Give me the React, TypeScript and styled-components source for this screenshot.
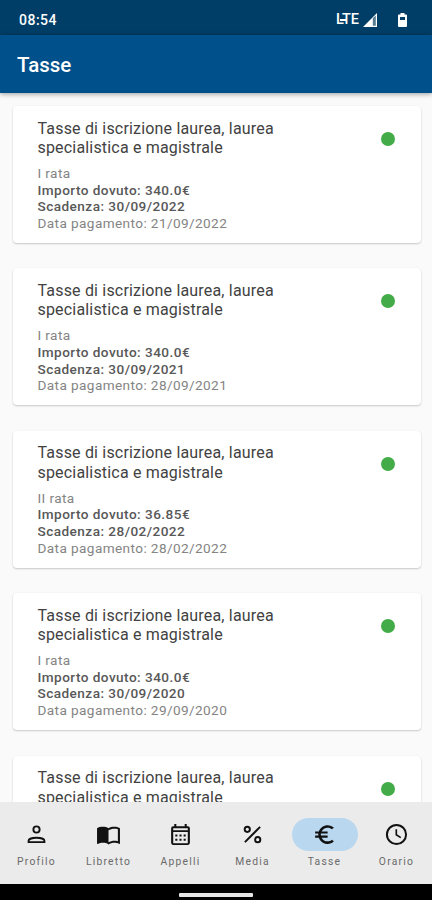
import React from "react";
import styled, { createGlobalStyle } from "styled-components";

const GlobalStyle = createGlobalStyle`
  * { box-sizing: border-box; }
  body { margin: 0; background: #fafafa; font-family: Roboto, sans-serif; }
`;

const Screen = styled.div`
  width: 432px;
  height: 900px;
  display: flex;
  flex-direction: column;
  overflow: hidden;
  background: #fafafa;
`;

const StatusBar = styled.div`
  flex: none;
  height: 35px;
  display: flex;
  align-items: center;
  padding: 5px 24px 0 19px;
  background: #003e67;
  color: #fff;
`;

const Clock = styled.span`
  flex: 1;
  font: 500 14px/16px Roboto, sans-serif;
  letter-spacing: 0.5px;
`;

const Network = styled.span`
  position: relative;
  font: 500 14.5px/16px Roboto, sans-serif;
  letter-spacing: 0;
  margin-right: 4px;

  &::after {
    content: "";
    position: absolute;
    left: 4px;
    top: 7px;
    width: 6px;
    height: 2px;
    background: #fff;
  }
`;

const StatusIcon = styled.svg<{ $gap?: number }>`
  display: block;
  flex: none;
  margin-right: ${(p) => p.$gap ?? 0}px;
`;

const AppBar = styled.header`
  flex: none;
  height: 58px;
  padding: 2px 17px 0;
  display: flex;
  align-items: center;
  background: #00508b;
  box-shadow: 0 1px 5px rgba(0, 0, 0, 0.4);
  z-index: 1;
`;

const Heading = styled.h1`
  margin: 0;
  color: #fff;
  font: 500 20.5px/26px Roboto, sans-serif;
`;

const FeeList = styled.main`
  flex: 1;
  min-height: 0;
  overflow: hidden;
  display: flex;
  flex-direction: column;
  gap: 25.4px;
  padding: 13px 11px 0 13px;
`;

const Card = styled.article`
  flex: none;
  height: 137px;
  display: flex;
  justify-content: space-between;
  padding: 12.5px 26px 0 24.5px;
  background: #fff;
  border-radius: 4px;
  box-shadow: 0 1px 2px rgba(0, 0, 0, 0.2), 0 0 2px rgba(0, 0, 0, 0.04);
`;

const CardTitle = styled.h2`
  margin: 0 0 7.4px;
  width: 250px;
  color: #424242;
  font: 400 16px/19.5px Roboto, sans-serif;
  letter-spacing: 0.18px;
`;

const Line = styled.p<{ $strong?: boolean }>`
  margin: 0;
  color: ${(p) => (p.$strong ? "#585858" : "#848484")};
  font: ${(p) => (p.$strong ? 500 : 400)} 13.6px/16.7px Roboto, sans-serif;
  letter-spacing: ${(p) => (p.$strong ? 0.45 : 0.4)}px;
  white-space: nowrap;
`;

const PaidDot = styled.span`
  width: 14px;
  height: 14px;
  margin-top: 13.5px;
  border-radius: 50%;
  background: #43ac49;
`;

const NavBar = styled.nav`
  flex: none;
  height: 82px;
  display: grid;
  grid-template-columns: repeat(6, 72px);
  background: #ebebeb;
  padding-top: 16px;
  z-index: 1;
`;

const NavItem = styled.a`
  display: flex;
  flex-direction: column;
  align-items: center;
  color: #111;
  padding-left: 1px;
`;

const Indicator = styled.span<{ $active?: boolean }>`
  width: 66px;
  height: 33px;
  border-radius: 17px;
  display: flex;
  align-items: center;
  justify-content: center;
  background: ${(p) => (p.$active ? "#b9d7ef" : "transparent")};
`;

const NavLabel = styled.span`
  margin-top: 3.5px;
  color: #6a6a6a;
  font: 400 10.3px/14px Roboto, sans-serif;
  letter-spacing: 1.25px;
`;

const GestureArea = styled.footer`
  flex: none;
  height: 16px;
  background: #000;
  display: flex;
  justify-content: center;
  padding-top: 9px;
`;

const GestureHandle = styled.span`
  width: 74px;
  height: 4px;
  border-radius: 1px;
  background: #e6e6e6;
`;

const fees = [
  { rata: "I rata", due: "340.0€", deadline: "30/09/2022", paid: "21/09/2022" },
  { rata: "I rata", due: "340.0€", deadline: "30/09/2021", paid: "28/09/2021" },
  { rata: "II rata", due: "36.85€", deadline: "28/02/2022", paid: "28/02/2022" },
  { rata: "I rata", due: "340.0€", deadline: "30/09/2020", paid: "29/09/2020" },
];

const tabs = [
  {
    label: "Profilo",
    icon: (
      <g fill="none" stroke="currentColor" strokeWidth="1.8">
        <circle cx="12" cy="7.2" r="3" />
        <path d="M4.4 19.3v-1.4c0-1.8 4-2.8 7.6-2.8s7.6 1 7.6 2.8v1.4z" />
      </g>
    ),
  },
  {
    label: "Libretto",
    icon: (
      <path
        fill="currentColor"
        d="M21 5c-1.11-.35-2.33-.5-3.5-.5-1.95 0-4.05.4-5.5 1.5-1.45-1.1-3.55-1.5-5.5-1.5S2.45 4.9 1 6v14.65c0 .25.25.5.5.5.1 0 .15-.05.25-.05C3.1 20.45 5.05 20 6.5 20c1.95 0 4.05.4 5.5 1.5 1.35-.85 3.8-1.5 5.5-1.5 1.65 0 3.35.3 4.75 1.05.1.05.15.05.25.05.25 0 .5-.25.5-.5V6c-.6-.45-1.25-.75-2-1zm0 13.5c-1.1-.35-2.3-.5-3.5-.5-1.7 0-4.15.65-5.5 1.5V8c1.35-.85 3.8-1.5 5.5-1.5 1.2 0 2.4.15 3.5.5v11.5z"
      />
    ),
  },
  {
    label: "Appelli",
    icon: (
      <g fill="currentColor">
        <path d="M19 4h-1V2h-2v2H8V2H6v2H5a2 2 0 0 0-2 2v14c0 1.1.9 2 2 2h14c1.1 0 2-.9 2-2V6a2 2 0 0 0-2-2zm0 16.4H5V9.5h14v10.9zm0-12.4H5V6h14v2z" />
        <path d="M7 12h2v2H7zm4 0h2v2h-2zm4 0h2v2h-2zm-8 4h2v2H7zm4 0h2v2h-2zm4 0h2v2h-2z" />
      </g>
    ),
  },
  {
    label: "Media",
    icon: (
      <g fill="none" stroke="currentColor" strokeWidth="1.9">
        <circle cx="7" cy="7" r="2.5" />
        <circle cx="17" cy="17" r="2.5" />
        <path d="M19.3 4.7L4.7 19.3" />
      </g>
    ),
  },
  {
    label: "Tasse",
    active: true,
    icon: (
      <path
        fill="currentColor"
        d="M15 18.5c-2.51 0-4.68-1.42-5.76-3.5H15v-2H8.58c-.05-.33-.08-.66-.08-1s.03-.67.08-1H15V9H9.24C10.32 6.92 12.5 5.5 15 5.5c1.61 0 3.09.59 4.23 1.57L21 5.3C19.41 3.87 17.3 3 15 3c-3.92 0-7.24 2.51-8.48 6H3v2h3.06c-.04.33-.06.66-.06 1s.02.67.06 1H3v2h3.52c1.24 3.49 4.56 6 8.48 6 2.31 0 4.41-.87 6-2.3l-1.78-1.77c-1.13.98-2.6 1.57-4.22 1.57z"
      />
    ),
  },
  {
    label: "Orario",
    icon: (
      <g fill="none" stroke="currentColor" strokeWidth="1.9">
        <circle cx="12" cy="12" r="9.2" />
        <path d="M11.8 7v5.3l4.3 2.7" strokeWidth="1.6" />
      </g>
    ),
  },
];

export default function App() {
  return (
    <Screen>
      <GlobalStyle />
      <StatusBar>
        <Clock>08:54</Clock>
        <Network>LTE</Network>
        <StatusIcon width="14" height="14" viewBox="0 0 14 14" $gap={21}>
          <path d="M0 14L14 0v14z" fill="#fff" />
          <path d="M9.8 5.3L12.8 2.4v10.3h-3z" fill="#557c91" />
        </StatusIcon>
        <StatusIcon width="9" height="14" viewBox="0 0 9 14" $gap={1}>
          <path fill="#fff" d="M2.5 0h4v1.4H8q1 0 1 1V13q0 1-1 1H1q-1 0-1-1V2.4q0-1 1-1h1.5z" />
          <path fill="#003e67" d="M2 4h5v3H2z" />
        </StatusIcon>
      </StatusBar>
      <AppBar>
        <Heading>Tasse</Heading>
      </AppBar>
      <FeeList>
        {fees.map((fee) => (
          <Card key={fee.deadline}>
            <div>
              <CardTitle>Tasse di iscrizione laurea, laurea specialistica e magistrale</CardTitle>
              <Line>{fee.rata}</Line>
              <Line $strong>Importo dovuto: {fee.due}</Line>
              <Line $strong>Scadenza: {fee.deadline}</Line>
              <Line>Data pagamento: {fee.paid}</Line>
            </div>
            <PaidDot />
          </Card>
        ))}
        <Card>
          <CardTitle>Tasse di iscrizione laurea, laurea specialistica e magistrale</CardTitle>
          <PaidDot />
        </Card>
      </FeeList>
      <NavBar>
        {tabs.map((tab) => (
          <NavItem key={tab.label}>
            <Indicator $active={tab.active}>
              <svg width="25" height="25" viewBox="0 0 24 24">
                {tab.icon}
              </svg>
            </Indicator>
            <NavLabel>{tab.label}</NavLabel>
          </NavItem>
        ))}
      </NavBar>
      <GestureArea>
        <GestureHandle />
      </GestureArea>
    </Screen>
  );
}
